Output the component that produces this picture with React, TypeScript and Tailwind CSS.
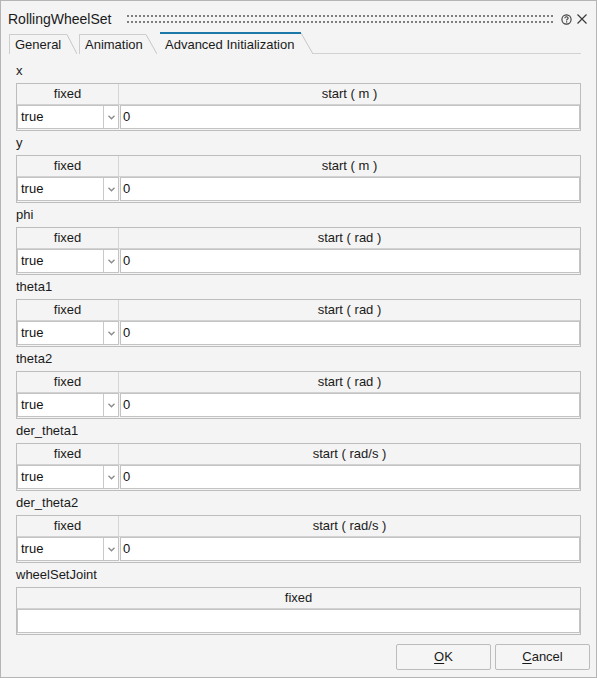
import type { ReactNode } from 'react';

type Variable = {
  name: string;
  unit: string;
};

const VARIABLES: Variable[] = [
  { name: 'x', unit: 'm' },
  { name: 'y', unit: 'm' },
  { name: 'phi', unit: 'rad' },
  { name: 'theta1', unit: 'rad' },
  { name: 'theta2', unit: 'rad' },
  { name: 'der_theta1', unit: 'rad/s' },
  { name: 'der_theta2', unit: 'rad/s' },
];

const FONT = "font-['Liberation_Sans',Arial,sans-serif]";

// Small grey chevron used by the combo boxes
function Chevron() {
  return (
    <svg width="7" height="5" viewBox="0 0 7 5">
      <path d="M0.5 0.8 L3.5 3.8 L6.5 0.8" fill="none" stroke="#8c8c8c" strokeWidth="1.4" />
    </svg>
  );
}

function HelpIcon() {
  return (
    <svg width="11" height="11" viewBox="0 0 11 11">
      <circle cx="5.5" cy="5.5" r="4.6" fill="none" stroke="#3a3a3a" strokeWidth="1.1" />
      <path
        d="M3.9 4.3 C3.9 3.3 4.6 2.8 5.5 2.8 C6.4 2.8 7.1 3.3 7.1 4.2 C7.1 5.1 5.6 5.2 5.6 6.4"
        fill="none"
        stroke="#3a3a3a"
        strokeWidth="1.1"
      />
      <rect x="5" y="7.3" width="1.2" height="1.2" fill="#3a3a3a" />
    </svg>
  );
}

function CloseIcon() {
  return (
    <svg width="10" height="10" viewBox="0 0 10 10">
      <path d="M0.5 0.5 L9.5 9.5 M9.5 0.5 L0.5 9.5" stroke="#3a3a3a" strokeWidth="1.2" />
    </svg>
  );
}

// Dotted drag grip in the title bar
function Grip() {
  return (
    <svg className="h-[8px] flex-1" height="8">
      <defs>
        <pattern id="grip-dots" width="4" height="6" patternUnits="userSpaceOnUse">
          <rect x="0" y="0" width="2" height="2" fill="#7e7e7e" />
        </pattern>
      </defs>
      <rect x="0" y="0" width="100%" height="8" fill="url(#grip-dots)" />
    </svg>
  );
}

function Tab({
  label,
  active,
  bodyWidth,
  slant,
}: {
  label: string;
  active?: boolean;
  bodyWidth: number;
  slant: number;
}) {
  const h = active ? 22 : 20;
  return (
    <div className="flex items-end">
      <div
        className={
          active
            ? 'h-[22px] border-t-2 border-[#1b78a8] pl-[5px] flex items-center'
            : 'h-[20px] border-l border-t border-[#cdcdcd] pl-[5px] flex items-center'
        }
        style={{ width: bodyWidth }}
      >
        <span className="text-[13px] text-[#1a1a1a] leading-none">{label}</span>
      </div>
      <svg width={slant} height={h} className="block">
        <line x1="0" y1={active ? 1 : 0.5} x2={slant} y2={h} stroke="#c6c6c6" strokeWidth="1" />
      </svg>
    </div>
  );
}

function Cell({ children, className = '' }: { children?: ReactNode; className?: string }) {
  return (
    <div
      className={`h-[24px] bg-white border border-[#c3c3c3] flex items-center text-[13px] text-[#111] ${className}`}
    >
      {children}
    </div>
  );
}

function VariableTable({ unit }: { unit: string }) {
  return (
    <div className="h-[48px] border border-[#bdbdbd] bg-[#f4f4f4] flex flex-col">
      <div className="h-[21px] flex border-b border-[#d2d2d2] text-[13px] text-[#1a1a1a]">
        <div className="w-[102px] flex items-center justify-center border-r border-[#d6d6d6]">
          fixed
        </div>
        <div className="flex-1 flex items-center justify-center">start ( {unit} )</div>
      </div>
      <div className="flex gap-[1px]">
        <Cell className="w-[102px]">
          <span className="flex-1 pl-[3px]">true</span>
          <span className="w-[15px] h-full border-l border-[#c9c9c9] flex items-center justify-center">
            <Chevron />
          </span>
        </Cell>
        <Cell className="flex-1">
          <span className="pl-[2px]">0</span>
        </Cell>
      </div>
    </div>
  );
}

function Group({ label, children }: { label: string; children: ReactNode }) {
  return (
    <div className="h-[72px] flex flex-col">
      <div className="h-[24px] flex items-center text-[13px] text-[#1a1a1a]">{label}</div>
      {children}
    </div>
  );
}

function DialogButton({ mnemonic, rest }: { mnemonic: string; rest: string }) {
  return (
    <button className="w-[95px] h-[26px] border border-[#bcbcbc] rounded-[2px] bg-[#f5f5f5] text-[13px] text-[#1a1a1a]">
      <span className="underline underline-offset-2">{mnemonic}</span>
      {rest}
    </button>
  );
}

export default function App() {
  return (
    <div className={`${FONT} w-[597px] h-[678px] bg-[#f4f4f4] border border-[#b5b5b5] flex flex-col`}>
      {/* TITLE BAR */}
      <div className="h-[30px] flex items-center pl-[7px] pr-[9px]">
        <span className="text-[14px] text-[#1a1a1a] pt-[7px]">RollingWheelSet</span>
        <div className="flex-1 flex items-center ml-[15px] mr-[8px] pt-[6px]">
          <Grip />
        </div>
        <div className="flex items-center gap-[5px] pt-[6px]">
          <HelpIcon />
          <CloseIcon />
        </div>
      </div>

      {/* TABS */}
      <div className="h-[23px] flex items-end pl-[8px]">
        <Tab label="General" bodyWidth={58} slant={10} />
        <div className="w-[2px]" />
        <Tab label="Animation" bodyWidth={67} slant={11} />
        <div className="w-[3px]" />
        <Tab label="Advanced Initialization" active bodyWidth={141} slant={12} />
        <div className="flex-1 h-[1px] bg-[#d2d2d2] mr-[15px]" />
      </div>

      {/* CONTENT */}
      <div className="flex-1 flex flex-col px-[15px] pt-[5px]">
        {VARIABLES.map((v) => (
          <Group key={v.name} label={v.name}>
            <VariableTable unit={v.unit} />
          </Group>
        ))}
        <Group label="wheelSetJoint">
          <div className="h-[48px] border border-[#bdbdbd] bg-[#f4f4f4] flex flex-col">
            <div className="h-[21px] flex items-center justify-center border-b border-[#d2d2d2] text-[13px] text-[#1a1a1a]">
              fixed
            </div>
            <Cell />
          </div>
        </Group>
      </div>

      {/* BUTTONS */}
      <div className="flex justify-end gap-[4px] pr-[6px] pb-[7px]">
        <DialogButton mnemonic="O" rest="K" />
        <DialogButton mnemonic="C" rest="ancel" />
      </div>
    </div>
  );
}
